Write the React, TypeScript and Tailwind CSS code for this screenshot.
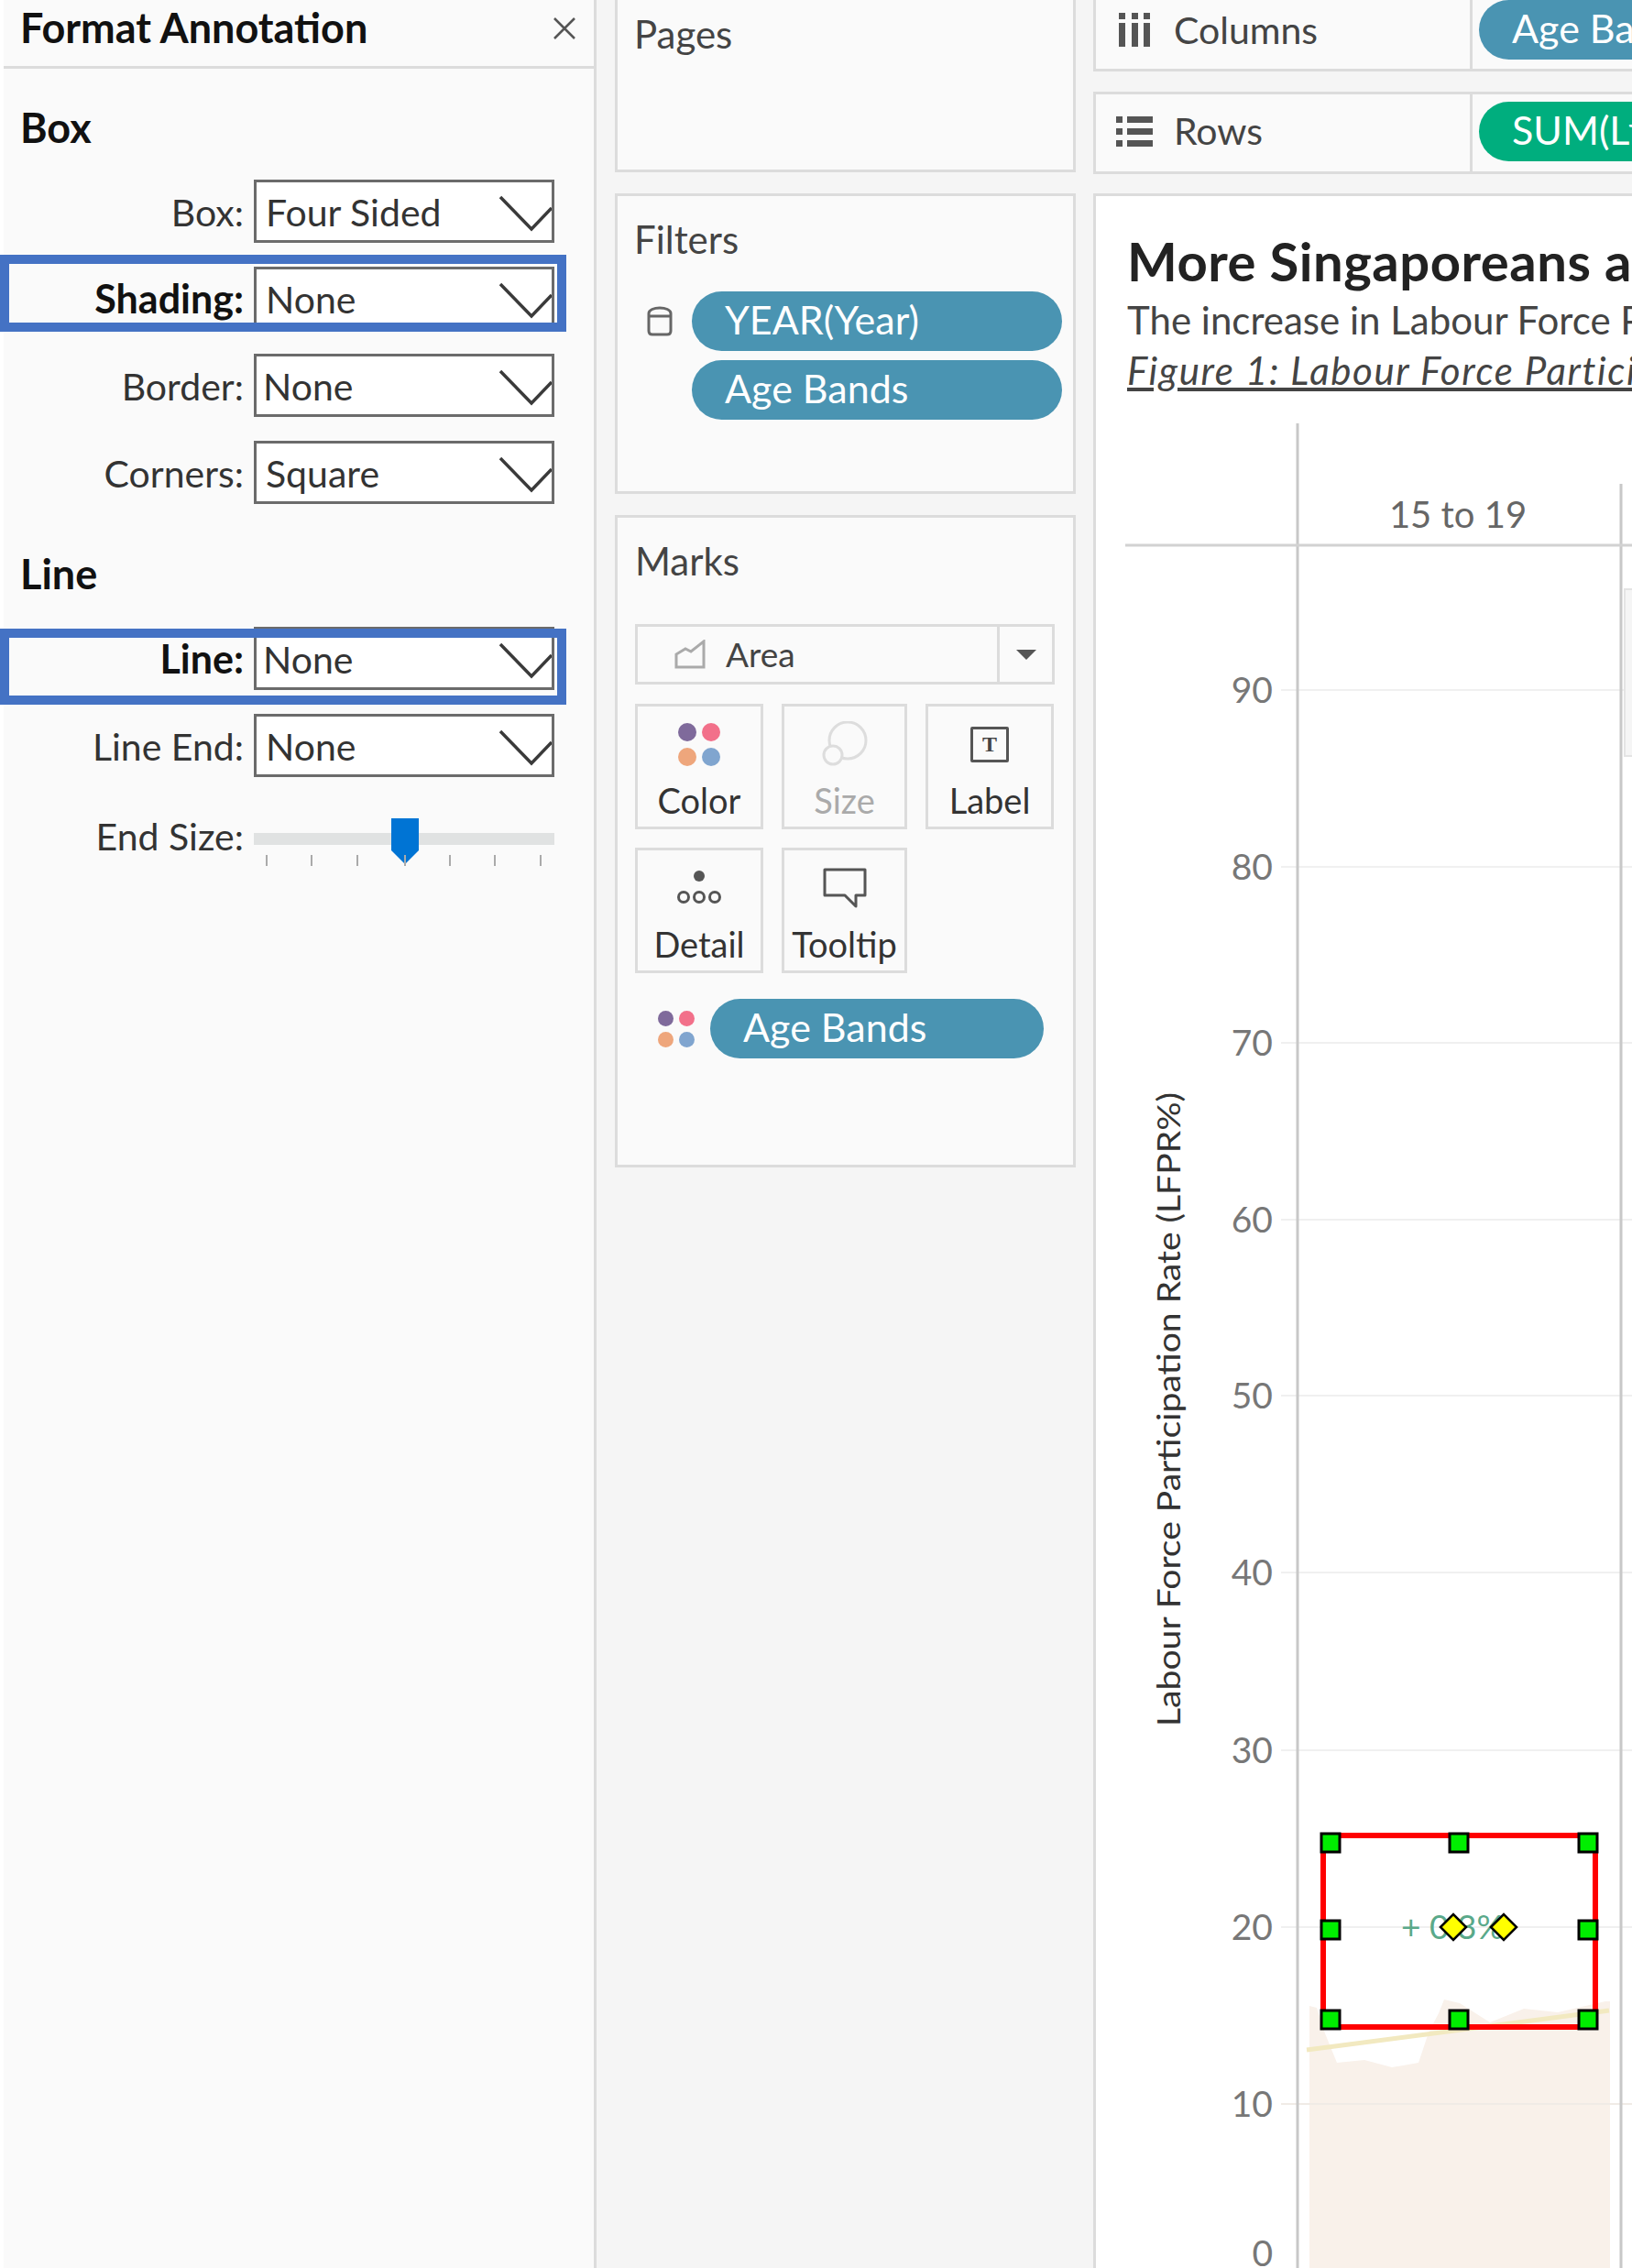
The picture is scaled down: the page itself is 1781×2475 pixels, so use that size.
import React from 'react';

const dots = ['bg-[#7f6a9b]', 'bg-[#f2708a]', 'bg-[#eea67c]', 'bg-[#80a5cf]'];

function Chevron() {
  return (
    <svg width="60" height="40" viewBox="0 0 60 40" fill="none" className="absolute right-0 top-[14px]">
      <path d="M4 2 L38 37 L60 14" stroke="#3a3a3a" strokeWidth="3.5" />
    </svg>
  );
}

function SelectRow({ label, value, bold, textLeft = 'pl-[10px]' }: { label: string; value: string; bold?: boolean; textLeft?: string }) {
  return (
    <div className="flex items-center h-[69px] mb-[26px]">
      <div className={`w-[262px] pt-[2px] text-right whitespace-nowrap ${bold ? 'font-bold text-[#111] text-[43px]' : 'text-[#333]'}`}>{label}</div>
      <div className={`relative ml-[11px] w-[328px] h-[69px] pt-[2px] bg-white border-[3px] border-[#6b6b6b] flex items-center ${textLeft} text-[#333] overflow-hidden`}>
        {value}
        <Chevron />
      </div>
    </div>
  );
}

function Highlight({ className }: { className: string }) {
  return <div className={`absolute left-[-4px] w-[618px] border-[10px] border-[#4472c4] ${className}`} />;
}

function Pill({ children, className = 'bg-[#4a94b2]' }: { children: React.ReactNode; className?: string }) {
  return (
    <div className={`h-[65px] rounded-full text-white text-[43px] flex items-center pl-[36px] pb-[2px] whitespace-nowrap overflow-hidden ${className}`}>
      {children}
    </div>
  );
}

function MarkButton({ label, icon, className = '', muted }: { label: string; icon: React.ReactNode; className?: string; muted?: boolean }) {
  return (
    <div className={`h-[137px] border-[3px] border-[#dcdcdc] flex flex-col items-center ${className}`}>
      <div className="h-[81px] pt-[1px] flex items-center justify-center">{icon}</div>
      <div className={`text-[38px] leading-[42px] whitespace-nowrap ${muted ? 'text-[#aaa]' : 'text-[#333]'}`}>{label}</div>
    </div>
  );
}

function FourDots({ size, gap }: { size: string; gap: string }) {
  return (
    <div className={`grid w-fit grid-cols-[auto_auto] ${gap}`}>
      {dots.map((d) => (
        <div key={d} className={`rounded-full ${size} ${d}`} />
      ))}
    </div>
  );
}

const ticks = [291, 340, 390, 442, 491, 540, 590];
const axis = [
  { v: 90, y: 753 },
  { v: 80, y: 946 },
  { v: 70, y: 1138 },
  { v: 60, y: 1331 },
  { v: 50, y: 1523 },
  { v: 40, y: 1716 },
  { v: 30, y: 1910 },
  { v: 20, y: 2103 },
  { v: 10, y: 2296 },
];
const handles = [
  [1452, 2011],
  [1592, 2011],
  [1733, 2011],
  [1452, 2106],
  [1733, 2106],
  [1452, 2204],
  [1592, 2204],
  [1733, 2204],
];

export default function App() {
  return (
    <div className="w-[1781px] h-[2475px] flex overflow-hidden bg-[#f5f5f5] font-['Lato',sans-serif] text-[41px]">
      {/* Format Annotation panel */}
      <div className="w-[651px] shrink-0 border-l-[4px] border-l-white border-r-[3px] border-r-[#dcdcdc] bg-[#fafafa]">
        <div className="h-[75px] border-b-[3px] border-[#dcdcdc] flex items-center justify-between pl-[18px] pr-[20px] pb-[10px]">
          <span className="font-bold text-[45px] text-[#111] whitespace-nowrap">Format Annotation</span>
          <svg width="24" height="24" viewBox="0 0 24 24" stroke="#555" strokeWidth="2.5">
            <path d="M1 1 L23 23 M23 1 L1 23" />
          </svg>
        </div>
        <div className="pl-[18px] pt-[40px] h-[121px] font-bold text-[45px] leading-[48px] text-[#111]">Box</div>
        <div>
          <SelectRow label="Box:" value="Four Sided" />
          <div className="relative">
            <SelectRow label="Shading:" value="None" bold />
            <Highlight className="top-[-13px] h-[84px]" />
          </div>
          <SelectRow label="Border:" value="None" textLeft="pl-[7px]" />
          <SelectRow label="Corners:" value="Square" />
        </div>
        <div className="pl-[18px] pt-[26px] h-[108px] font-bold text-[45px] leading-[48px] text-[#111]">Line</div>
        <div className="relative">
          <SelectRow label="Line:" value="None" bold textLeft="pl-[7px]" />
          <Highlight className="top-[2px] h-[83px]" />
        </div>
        <SelectRow label="Line End:" value="None" />
        <div className="flex items-start pt-[22px]">
          <div className="w-[262px] text-right text-[#333] leading-[48px] mt-[-7px] whitespace-nowrap">End Size:</div>
          <div className="relative ml-[11px] w-[328px] h-[60px]">
            <div className="h-[13px] mt-[13px] bg-[#e0e2e2]" />
            <div className="absolute left-[150px] top-[-3px] w-[30px] h-[50px] bg-[#0074d4] [clip-path:polygon(0_0,100%_0,100%_70%,50%_100%,0_70%)]" />
            {ticks.map((t) => (
              <div key={t} className="absolute top-[37px] w-[2px] h-[12px] bg-[#aaa]" style={{ left: t - 278 }} />
            ))}
          </div>
        </div>
      </div>

      {/* Pages / Filters / Marks */}
      <div className="w-[542px] shrink-0 pl-[20px] pr-[19px] flex flex-col text-[42px]">
        <div className="h-[188px] border-[3px] border-t-0 border-[#dcdcdc] bg-[#fafafa] pl-[18px] pt-[14px] text-[#444] leading-[46px]">Pages</div>
        <div className="h-[328px] mt-[23px] border-[3px] border-[#dcdcdc] bg-[#fafafa]">
          <div className="pl-[18px] pt-[24px] h-[104px] text-[#444] leading-[46px]">Filters</div>
          <div className="flex">
            <div className="w-[81px] pl-[32px] pt-[15px]">
              <svg width="28" height="34" viewBox="0 0 28 34" fill="none" stroke="#666" strokeWidth="3">
                <path d="M2 9 C2 1 26 1 26 9 V28 Q26 32 22 32 H6 Q2 32 2 28 Z M2 12 H26" />
              </svg>
            </div>
            <div className="w-[404px] flex flex-col gap-[10px]">
              <Pill>YEAR(Year)</Pill>
              <Pill>Age Bands</Pill>
            </div>
          </div>
        </div>
        <div className="h-[712px] mt-[23px] border-[3px] border-[#dcdcdc] bg-[#fafafa] pl-[19px]">
          <div className="pt-[24px] h-[116px] text-[#444] leading-[46px]">Marks</div>
          <div className="w-[458px] h-[66px] border-[3px] border-[#dcdcdc] flex items-center text-[37px] text-[#444]">
            <svg width="34" height="32" viewBox="0 0 34 32" fill="none" stroke="#aaa" strokeWidth="3" className="ml-[40px]">
              <path d="M2 30 V16 L12 10 L18 13 L32 2 V30 Z" />
            </svg>
            <span className="ml-[22px] flex-1">Area</span>
            <div className="w-[60px] h-full border-l-[3px] border-[#dcdcdc] flex items-center justify-center">
              <div className="w-0 h-0 border-x-[11px] border-x-transparent border-t-[11px] border-t-[#555]" />
            </div>
          </div>
          <div className="flex gap-[20px] mt-[21px]">
            <MarkButton className="w-[140px]" label="Color" icon={<FourDots size="w-[20px] h-[20px]" gap="gap-x-[6px] gap-y-[7px]" />} />
            <MarkButton
              className="w-[137px]"
              label="Size"
              muted
              icon={
                <svg width="50" height="50" viewBox="0 0 50 50" fill="none" stroke="#ddd" strokeWidth="3">
                  <circle cx="28" cy="21" r="20" fill="#fafafa" />
                  <circle cx="12" cy="37" r="10" fill="#fafafa" />
                </svg>
              }
            />
            <MarkButton
              className="w-[140px]"
              label="Label"
              icon={
                <div className="w-[42px] h-[39px] border-[3px] border-[#555] rounded-[2px] flex items-center justify-center font-['Liberation_Serif',serif] font-bold text-[24px] leading-none text-[#444]">
                  T
                </div>
              }
            />
          </div>
          <div className="flex gap-[20px] mt-[20px]">
            <MarkButton
              className="w-[140px]"
              label="Detail"
              icon={
                <svg width="50" height="42" viewBox="0 0 50 42" fill="none" stroke="#555" strokeWidth="3">
                  <circle cx="25" cy="8" r="6" fill="#555" stroke="none" />
                  <circle cx="8" cy="31" r="5.5" />
                  <circle cx="25" cy="31" r="5.5" />
                  <circle cx="42" cy="31" r="5.5" />
                </svg>
              }
            />
            <MarkButton
              className="w-[137px]"
              label="Tooltip"
              icon={
                <svg width="48" height="44" viewBox="0 0 48 44" fill="none" stroke="#555" strokeWidth="3">
                  <path d="M2 2 H46 V30 H36 V42 L24 30 H2 Z" strokeLinejoin="round" />
                </svg>
              }
            />
          </div>
          <div className="flex items-center mt-[28px]">
            <div className="ml-[25px] w-[57px]">
              <FourDots size="w-[17px] h-[17px]" gap="gap-x-[6px] gap-y-[6px]" />
            </div>
            <Pill className="w-[364px] bg-[#4a94b2]">Age Bands</Pill>
          </div>
        </div>
      </div>

      {/* Shelves and viz */}
      <div className="flex-1 min-w-0 flex flex-col">
        <div className="h-[78px] border-[3px] border-t-0 border-r-0 border-[#dcdcdc] bg-[#fafafa] flex text-[#444]">
          <div className="w-[411px] flex items-center border-r-[3px] border-[#dcdcdc] pb-[10px]">
            <div className="ml-[25px] w-[34px] flex justify-between">
              {[0, 1, 2].map((i) => (
                <div key={i} className="w-[7px] flex flex-col gap-[4px]">
                  <div className="h-[7px] bg-[#555]" />
                  <div className="h-[26px] bg-[#555]" />
                </div>
              ))}
            </div>
            <span className="ml-[26px]">Columns</span>
          </div>
          <div className="pl-[7px] flex-1 overflow-hidden">
            <Pill className="w-[300px] bg-[#4a94b2]">Age Bands</Pill>
          </div>
        </div>
        <div className="h-[90px] mt-[22px] border-[3px] border-r-0 border-[#dcdcdc] bg-[#fafafa] flex text-[#444]">
          <div className="w-[411px] flex items-center border-r-[3px] border-[#dcdcdc] pb-[4px]">
            <div className="ml-[22px] w-[40px] flex flex-col gap-[6px]">
              {[0, 1, 2].map((i) => (
                <div key={i} className="flex gap-[5px]">
                  <div className="w-[7px] h-[7px] bg-[#555]" />
                  <div className="flex-1 h-[7px] bg-[#555]" />
                </div>
              ))}
            </div>
            <span className="ml-[23px]">Rows</span>
          </div>
          <div className="pl-[7px] pt-[8px] flex-1 overflow-hidden">
            <Pill className="w-[300px] bg-[#00ae7e]">SUM(Lfpr)</Pill>
          </div>
        </div>
        <div className="mt-[21px] flex-1 border-[3px] border-r-0 border-b-0 border-[#dcdcdc] bg-white overflow-hidden">
          <div className="pl-[34px] pt-[40px] whitespace-nowrap">
            <div className="font-bold text-[58px] leading-[62px] tracking-[0.5px] text-[#222]">More Singaporeans are</div>
            <div className="text-[42px] leading-[46px] text-[#444] mt-[10px]">The increase in Labour Force Participation</div>
            <div className="text-[42px] leading-[46px] text-[#444] italic underline tracking-[1.6px] mt-[9px]">Figure 1: Labour Force Participation</div>
          </div>
          <svg width="588" height="2025" viewBox="1196 450 588 2025" className="block mt-[23px]">
            {axis.map((a) => (
              <g key={a.v}>
                <line x1="1398" x2="1784" y1={a.y} y2={a.y} stroke="#f0f0f0" strokeWidth="2" />
                <text x="1389" y={a.y + 14} textAnchor="end" fontSize="39" fill="#777">{a.v}</text>
              </g>
            ))}
            <text x="1389" y="2473" textAnchor="end" fontSize="39" fill="#777">0</text>
            <polygon
              fill="#f9f1ea"
              points="1429,2189 1437,2191 1446,2219 1459,2251 1489,2248 1519,2256 1548,2251 1559,2218 1570,2197 1576,2182 1593,2186 1626,2207 1663,2192 1700,2196 1752,2184 1757,2184 1757,2475 1429,2475"
            />
            <line x1="1426" y1="2237" x2="1756" y2="2194" stroke="#f2e9c0" strokeWidth="5" />
            <line x1="1398" x2="1784" y1="2296" y2="2296" stroke="#f0ebe6" strokeWidth="2" />
            <line x1="1416" x2="1416" y1="462" y2="2475" stroke="#c8c8c8" strokeWidth="3" />
            <line x1="1769" x2="1769" y1="528" y2="2475" stroke="#c8c8c8" strokeWidth="3" />
            <line x1="1228" x2="1784" y1="595" y2="595" stroke="#d2d2d2" strokeWidth="3" />
            <rect x="1773" y="643" width="12" height="182" fill="#f5f5f5" stroke="#e4e4e4" strokeWidth="2" />
            <text x="1591" y="576" textAnchor="middle" fontSize="40" fill="#666">15 to 19</text>
            <text
              transform="translate(1288 1884) rotate(-90)"
              fontSize="34"
              fill="#333"
              textLength="692"
              lengthAdjust="spacingAndGlyphs"
            >
              Labour Force Participation Rate (LFPR%)
            </text>
            <text x="1529" y="2116" fontSize="37" fill="#5aa98a">+ 0.3%</text>
            <rect x="1444" y="2003" width="297" height="209" fill="none" stroke="#ff0000" strokeWidth="6" />
            {handles.map(([x, y]) => (
              <rect key={`${x}-${y}`} x={x - 10} y={y - 10} width="20" height="20" fill="#00ee00" stroke="#000" strokeWidth="3" />
            ))}
            {[1586, 1641].map((x) => (
              <polygon key={x} points={`${x - 14},2103 ${x},2089 ${x + 14},2103 ${x},2117`} fill="#ffff00" stroke="#000" strokeWidth="2.5" />
            ))}
          </svg>
        </div>
      </div>
    </div>
  );
}
